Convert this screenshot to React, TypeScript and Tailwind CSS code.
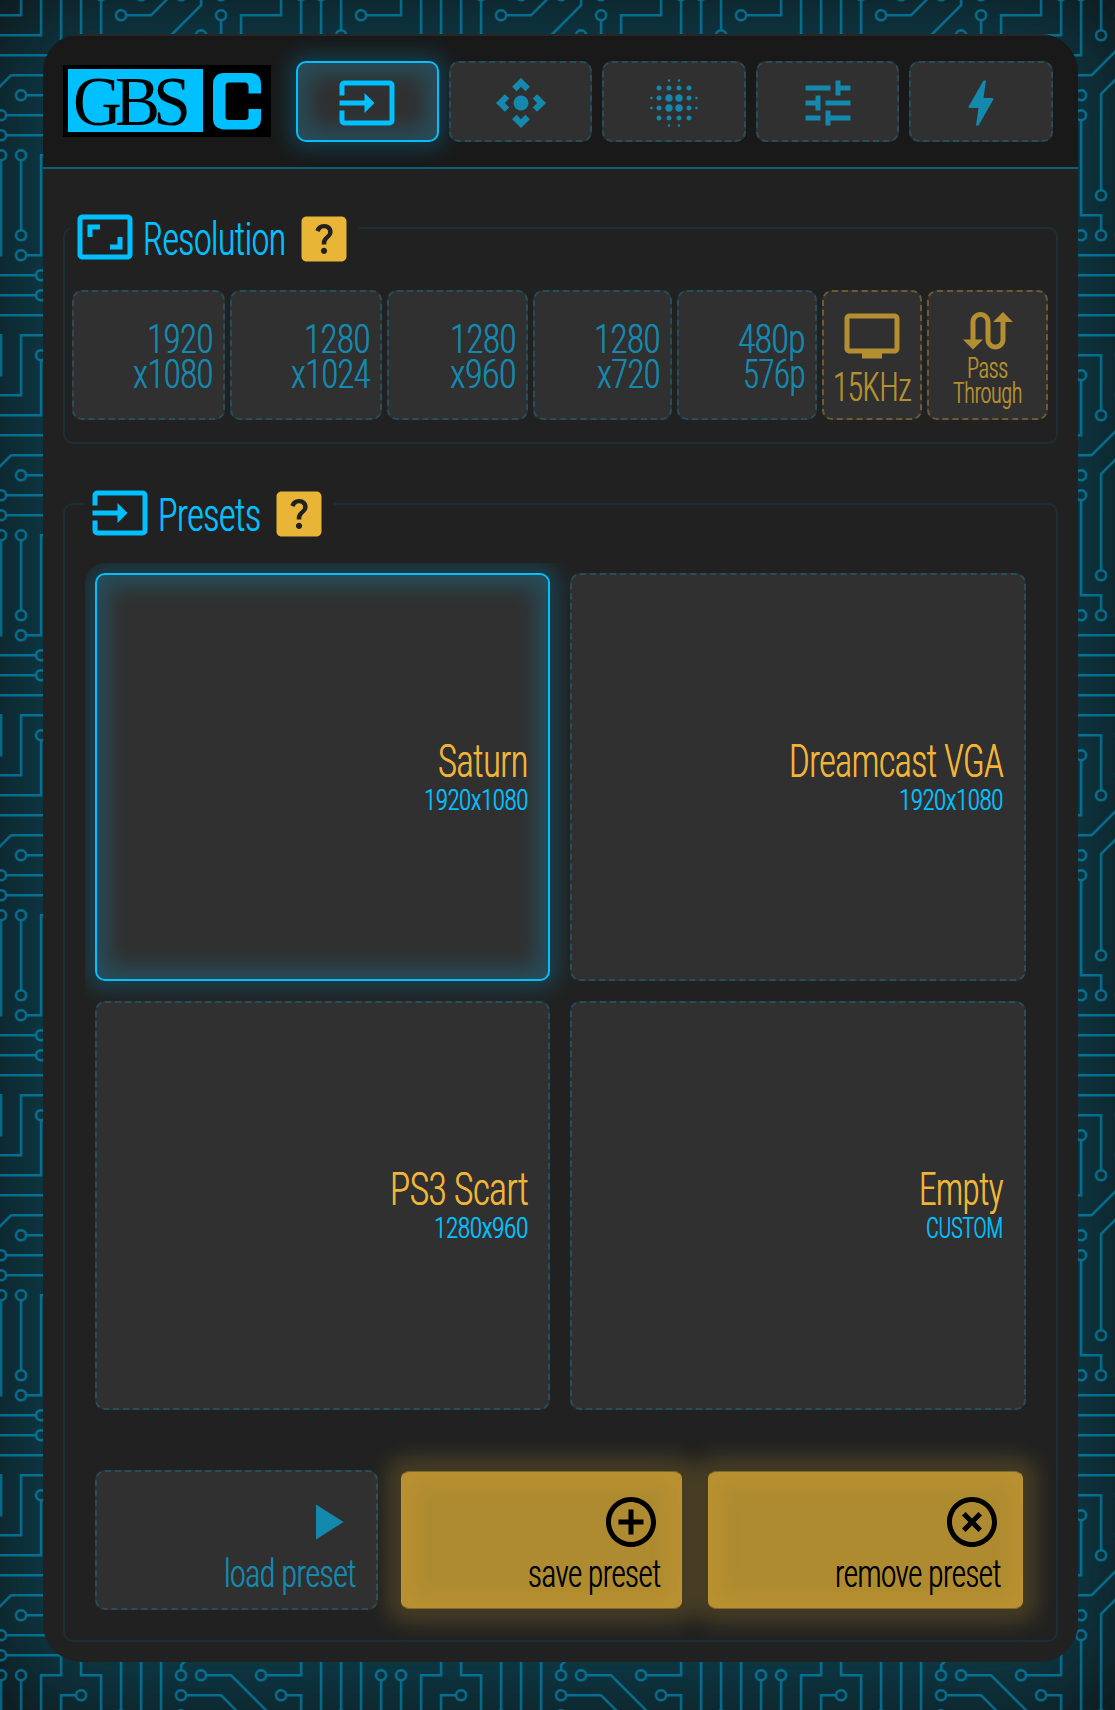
import { useLayoutEffect, useRef, useState } from "react";
import {
  MdAddCircleOutline,
  MdAspectRatio,
  MdBlurOn,
  MdBolt,
  MdControlCamera,
  MdHelpCenter,
  MdHighlightOff,
  MdInput,
  MdPlayArrow,
  MdSwapCalls,
  MdTune,
  MdTv,
} from "react-icons/md";

const TRACES =
  "M44.1 224a5 5 0 1 1 0 2H0v-2h44.1zm160 48a5 5 0 1 1 0 2H82v-2h122.1zm57.8-46a5 5 0 1 1 0-2H304v2h-42.1zm0 16a5 5 0 1 1 0-2H304v2h-42.1zm6.2-114a5 5 0 1 1 0 2h-86.2a5 5 0 1 1 0-2h86.2zm-256-48a5 5 0 1 1 0 2H0v-2h12.1zm185.8 34a5 5 0 1 1 0-2h86.2a5 5 0 1 1 0 2h-86.2zM258 12.1a5 5 0 1 1-2 0V0h2v12.1zm-64 208a5 5 0 1 1-2 0v-54.2a5 5 0 1 1 2 0v54.2zm48-198.2V80h62v2h-64V21.9a5 5 0 1 1 2 0zm16 16V64h46v2h-48V37.9a5 5 0 1 1 2 0zm-128 96V208h16v12.1a5 5 0 1 1-2 0V210h-16v-76.1a5 5 0 1 1 2 0zm-5.9-21.9a5 5 0 1 1 0 2H114v48H85.9a5 5 0 1 1 0-2H112v-48h12.1zm-6.2 130a5 5 0 1 1 0-2H176v-74.1a5 5 0 1 1 2 0V242h-60.1zm-16-64a5 5 0 1 1 0-2H114v48h10.1a5 5 0 1 1 0 2H112v-48h-10.1zM66 284.1a5 5 0 1 1-2 0V274H50v30h-2v-32h18v12.1zM236.1 176a5 5 0 1 1 0 2H226v94h48v32h-2v-30h-48v-98h12.1zm25.8-30a5 5 0 1 1 0-2H274v44.1a5 5 0 1 1-2 0V146h-10.1zm-64 96a5 5 0 1 1 0-2H208v-80h16v-14h-42.1a5 5 0 1 1 0-2H226v18h-16v80h-12.1zm86.2-210a5 5 0 1 1 0 2H272V0h2v32h10.1zM98 101.9V146H53.9a5 5 0 1 1 0-2H96v-42.1a5 5 0 1 1 2 0zM53.9 34a5 5 0 1 1 0-2H80V0h2v34H53.9zm60.1 3.9V66H82v64H69.9a5 5 0 1 1 0-2H80V64h32V37.9a5 5 0 1 1 2 0zM101.9 82a5 5 0 1 1 0-2H128V37.9a5 5 0 1 1 2 0V82h-28.1zm16-64a5 5 0 1 1 0-2H146v44.1a5 5 0 1 1-2 0V18h-26.1zm102.2 270a5 5 0 1 1 0 2H98v14h-2v-16h124.1zM242 149.9V160h16v34h-16v62h48v48h-2v-46h-48v-66h16v-30h-16v-12.1a5 5 0 1 1 2 0zM53.9 18a5 5 0 1 1 0-2H64V2H48V0h18v18H53.9zm112 32a5 5 0 1 1 0-2H192V0h50v2h-48v48h-28.1zm-48-48a5 5 0 0 1-9.8-2h2.07a3 3 0 1 0 5.66 0H178v34h-18V21.9a5 5 0 1 1 2 0V32h14V2h-58.1zm0 96a5 5 0 1 1 0-2H137l32-32h39V21.9a5 5 0 1 1 2 0V66h-40.17l-32 32H117.9zm28.1 90.1a5 5 0 1 1-2 0v-76.51L175.59 80H224V21.9a5 5 0 1 1 2 0V82h-49.59L146 112.41v75.69zm16 32a5 5 0 1 1-2 0v-99.51L184.59 96H300.1a5 5 0 0 1 3.9-3.9v2.07a3 3 0 0 0 0 5.66v2.07a5 5 0 0 1-3.9-3.9H185.41L162 121.41v98.69zm-144-64a5 5 0 1 1-2 0v-3.51l48-48V48h32V0h2v50H66v55.41l-48 48v2.69zM50 53.9v43.51l-48 48V208h26.1a5 5 0 1 1 0 2H0v-65.41l48-48V53.9a5 5 0 1 1 2 0zm-16 16V89.41l-34 34v-2.82l32-32V69.9a5 5 0 1 1 2 0zM12.1 32a5 5 0 1 1 0 2H9.41L0 43.41V40.6L8.59 32h3.51zm265.8 18a5 5 0 1 1 0-2h18.69l7.41-7.41v2.82L297.41 50H277.9zm-16 160a5 5 0 1 1 0-2H288v-71.41l16-16v2.82l-14 14V210h-28.1zm-208 32a5 5 0 1 1 0-2H64v-22.59L40.59 194H21.9a5 5 0 1 1 0-2H41.41L66 216.59V242H53.9zm150.2 14a5 5 0 1 1 0 2H96v-56.6L56.6 162H37.9a5 5 0 1 1 0-2h19.5L98 200.6V256h106.1zm-150.2 2a5 5 0 1 1 0-2H80v-46.59L48.59 178H21.9a5 5 0 1 1 0-2H49.41L82 208.59V258H53.9zM34 39.8v1.61L9.41 66H0v-2h8.59L32 40.59V0h2v39.8zM2 300.1a5 5 0 0 1 3.9 3.9H3.83A3 3 0 0 0 0 302.17V256h18v48h-2v-46H2v42.1zM34 241v63h-2v-62H0v-2h34v1zM17 18H0v-2h16V0h2v18h-1zm273-2h14v2h-16V0h2v16zm-32 273v15h-2v-14h-14v14h-2v-16h18v1zM0 92.1A5.02 5.02 0 0 1 6 97a5 5 0 0 1-6 4.9v-2.07a3 3 0 1 0 0-5.66V92.1zM80 272h2v32h-2v-32zm37.9 32h-2.07a3 3 0 0 0-5.66 0h-2.07a5 5 0 0 1 9.8 0zM5.9 0A5.02 5.02 0 0 1 0 5.9V3.83A3 3 0 0 0 3.83 0H5.9zm294.2 0h2.07A3 3 0 0 0 304 3.83V5.9a5 5 0 0 1-3.9-5.9zm3.9 300.1v2.07a3 3 0 0 0-1.83 1.83h-2.07a5 5 0 0 1 3.9-3.9z";

// Follows the traces and returns a ring-hole subpath for every solder pad they end in.
function padHoles(d: string): string {
  const out: string[] = [];
  let x = 0;
  let y = 0;
  let sx = 0;
  let sy = 0;
  for (const [, cmd, args] of d.matchAll(/([a-zA-Z])([^a-zA-Z]*)/g)) {
    const n = (args.match(/-?\d*\.?\d+/g) ?? []).map(Number);
    const rel = cmd === cmd.toLowerCase();
    const bx = rel ? x : 0;
    const by = rel ? y : 0;
    switch (cmd.toLowerCase()) {
      case "m":
        x = sx = bx + n[0];
        y = sy = by + n[1];
        break;
      case "l":
        x = bx + n[0];
        y = by + n[1];
        break;
      case "h":
        x = bx + n[0];
        break;
      case "v":
        y = by + n[0];
        break;
      case "a": {
        const nx = bx + n[5];
        const ny = by + n[6];
        if (n[0] === 5 && n[3] === 1 && n[4] === 1) {
          const cx = Math.round((x + nx) / 2 + (ny - y) * 2.45);
          const cy = Math.round((y + ny) / 2 - (nx - x) * 2.45);
          out.push(`M${cx} ${cy + 3}a3 3 0 1 0 0-6 3 3 0 0 0 0 6z`);
        }
        x = nx;
        y = ny;
        break;
      }
      default:
        x = sx;
        y = sy;
    }
  }
  return out.join("");
}

const CIRCUIT = TRACES + padHoles(TRACES);

function CircuitBackground() {
  return (
    <svg className="absolute inset-0 h-full w-full" aria-hidden="true">
      <defs>
        <pattern
          id="circuit"
          width="304"
          height="304"
          patternUnits="userSpaceOnUse"
          patternTransform="translate(-220.2 -46) scale(1.25)"
        >
          <path d={CIRCUIT} fill="#00c0ff" fillOpacity="0.44" />
        </pattern>
      </defs>
      <rect width="100%" height="100%" fill="url(#circuit)" />
    </svg>
  );
}

// Condensed lettering: squeezes the text horizontally to the width of its box.
function Narrow({ text, className }: { text: string; className: string }) {
  const box = useRef<HTMLSpanElement>(null);
  const ink = useRef<HTMLSpanElement>(null);
  const [k, setK] = useState(1);
  useLayoutEffect(() => {
    if (box.current && ink.current) setK(box.current.offsetWidth / ink.current.offsetWidth);
  }, [text]);
  return (
    <span ref={box} className={`block shrink-0 ${className}`}>
      <span
        ref={ink}
        className="inline-block origin-left whitespace-nowrap align-top"
        style={{ transform: `scaleX(${k})` }}
      >
        {text}
      </span>
    </span>
  );
}

function Logo() {
  return (
    <div className="mt-1 flex h-[72px] w-[208px] bg-black pt-1 pl-[5px]">
      <div className="h-[63px] w-[135px] bg-[#00c0ff] pl-[5px] font-['Liberation_Serif',serif] font-normal text-black">
        <Narrow text="GBS" className="w-[111px] text-[70px] leading-[66px] tracking-[-7px]" />
      </div>
      <svg className="mt-1 ml-[10px] h-[57px] w-[49px]" viewBox="0 0 49 57" fill="#00c0ff" role="img" aria-label="C">
        <path d="M10 0H38Q48 1 48 11V20.500H35.500V13Q35 9.500 32 9.500H16Q12.500 9.500 12.500 13V44Q12.500 47 16 47H32Q35 47 35.500 44V36H48V46Q48 55.500 38 56.500H10Q0 55.500 0 46V11Q0 1 10 0Z" />
      </svg>
    </div>
  );
}

const NAV = [MdInput, MdControlCamera, MdBlurOn, MdTune, MdBolt];

function Nav() {
  return (
    <nav className="grid h-[81px] grid-cols-[143px_143px_144px_143px_144px] gap-[10px]">
      {NAV.map((Icon, i) => (
        <button
          key={i}
          className={
            i === 0
              ? "flex items-center justify-center rounded-[10px] border-2 border-[#00c0ff] bg-[#303030] pt-[2px] pr-[1px] text-[#00c0ff] shadow-[0_0_20px_8px_rgba(0,192,255,0.2),inset_0_0_20px_12px_rgba(0,192,255,0.2)]"
              : "flex items-center justify-center rounded-[10px] border-2 border-dashed border-[#264f5d] bg-[#303030] pt-[2px] text-[#1588ae]"
          }
        >
          <Icon size={60} />
        </button>
      ))}
    </nav>
  );
}

function Legend({
  icon: Icon,
  text,
  width,
  className,
  helpClass,
}: {
  icon: typeof MdInput;
  text: string;
  width: string;
  className: string;
  helpClass: string;
}) {
  return (
    <legend className={`h-[78px] pt-[18px] pr-[5px] pl-[5px] ${className}`}>
      <span className="flex items-start text-[#00c0ff]">
        <Icon size={60} className="shrink-0" />
        <Narrow text={text} className={`ml-2 text-[47px] leading-[64px] ${width}`} />
        <MdHelpCenter size={60} className={`shrink-0 text-[#e9b537] ${helpClass}`} />
      </span>
    </legend>
  );
}

const RESOLUTIONS = [
  { box: "w-[153px]", a: "1920", aw: "w-[66px]", b: "x1080", bw: "w-[80px]" },
  { box: "w-[152px]", a: "1280", aw: "w-[66px]", b: "x1024", bw: "w-[79px]" },
  { box: "w-[141px]", a: "1280", aw: "w-[66px]", b: "x960", bw: "w-[66px]" },
  { box: "w-[139px]", a: "1280", aw: "w-[66px]", b: "x720", bw: "w-[63px]" },
  { box: "w-[140px]", a: "480p", aw: "w-[67px]", b: "576p", bw: "w-[62px]" },
];

function Resolutions() {
  return (
    <fieldset className="mt-5 h-[255px] rounded-[10px] border-2 border-[#1c2f36] pr-2 pl-[7px]">
      <Legend
        icon={MdAspectRatio}
        text="Resolution"
        width="w-[143px]"
        className="-ml-[2px]"
        helpClass="mt-[2px] ml-2"
      />
      <div className="mt-[23px] flex h-[130px] gap-[5px] text-[41px] leading-[35px] text-[#1588ae]">
        {RESOLUTIONS.map((r, i) => (
          <button
            key={i}
            className={`flex flex-col items-end rounded-[10px] border-2 border-dashed border-[#264f5d] bg-[#303030] pt-[30px] pr-[10px] ${r.box}`}
          >
            <Narrow text={r.a} className={r.aw} />
            <Narrow text={r.b} className={r.bw} />
          </button>
        ))}
        <button className="flex w-[100px] flex-col items-center rounded-[10px] border-2 border-dashed border-[#6f5b32] bg-[#303030] pt-[14px] text-[#b38f31]">
          <MdTv size={60} className="mr-[1px]" />
          <Narrow text="15KHz" className="mt-[4px] w-[78px]" />
        </button>
        <button className="flex w-[121px] flex-col items-center rounded-[10px] border-2 border-dashed border-[#6f5b32] bg-[#303030] pt-[10px] text-[29px] leading-[25px] text-[#b38f31]">
          <MdSwapCalls size={60} />
          <Narrow text="Pass" className="-mt-[6px] w-[41px]" />
          <Narrow text="Through" className="w-[69px]" />
        </button>
      </div>
    </fieldset>
  );
}

const PRESETS = [
  { name: "Saturn", nw: "w-[90px]", res: "1920x1080", rw: "w-[104px]", pad: "pr-5", on: true },
  { name: "Dreamcast VGA", nw: "w-[214px]", res: "1920x1080", rw: "w-[104px]", pad: "pr-[21px]", on: false },
  { name: "PS3 Scart", nw: "w-[138px]", res: "1280x960", rw: "w-[94px]", pad: "pr-5", on: false },
  { name: "Empty", nw: "w-[84px]", res: "CUSTOM", rw: "w-[77px]", pad: "pr-[21px]", on: false },
];

const GOLD =
  "flex h-[138px] flex-col items-end rounded-[8px] border border-x-[#c0972f] border-y-[#80672e] bg-[#ae8b30] pt-[20px] text-black shadow-[0_0_20px_15px_rgba(233,181,55,0.18),inset_0_0_20px_12px_rgba(233,170,55,0.2)]";

function Presets() {
  return (
    <fieldset className="mt-[21px] h-[1177px] rounded-[10px] border-2 border-[#1c2f36] px-5">
      <Legend icon={MdInput} text="Presets" width="w-[103px]" className="" helpClass="mt-[1px] ml-2" />
      <div className="mt-5 grid h-[857px] grid-cols-[455px_456px] grid-rows-[408px_409px] gap-5 overflow-hidden rounded-[20px] p-[10px]">
        {PRESETS.map((p) => (
          <button
            key={p.name}
            className={
              p.on
                ? `flex flex-col items-end rounded-[10px] border-2 border-[#00c0ff] bg-[#303030] pt-[161px] shadow-[0_0_20px_9px_rgba(0,192,255,0.2),inset_0_0_20px_12px_rgba(0,192,255,0.2)] ${p.pad}`
                : `flex flex-col items-end rounded-[10px] border-2 border-dashed border-[#264f5d] bg-[#303030] pt-[161px] ${p.pad}`
            }
          >
            <Narrow text={p.name} className={`text-[46px] leading-[50px] text-[#f0b537] ${p.nw}`} />
            <Narrow text={p.res} className={`text-[29px] leading-[28px] text-[#00c0ff] ${p.rw}`} />
          </button>
        ))}
      </div>
      <div className="mt-[50px] flex h-[140px] items-center px-[10px] text-[38px] leading-[44px]">
        <button className="flex h-[140px] w-[283px] flex-col items-end rounded-[10px] border-2 border-dashed border-[#264f5d] bg-[#303030] pt-[20px] pr-[20px] text-[#1588ae]">
          <MdPlayArrow size={60} />
          <Narrow text="load preset" className="w-[132px]" />
        </button>
        <button className={`ml-[23px] w-[281px] pr-[20px] ${GOLD}`}>
          <MdAddCircleOutline size={60} />
          <Narrow text="save preset" className="w-[133px]" />
        </button>
        <button className={`ml-[26px] w-[315px] pr-[21px] ${GOLD}`}>
          <MdHighlightOff size={60} className="-mr-[1px]" />
          <Narrow text="remove preset" className="w-[166px]" />
        </button>
      </div>
    </fieldset>
  );
}

export default function App() {
  return (
    <div className="relative h-[1710px] w-[1115px] overflow-hidden bg-[#0d4150] px-[43px] pt-[34px] font-[Roboto,sans-serif] shadow-[inset_0_0_120px_#101010]">
      <CircuitBackground />
      <main className="relative h-[1628px] w-[1035px] overflow-hidden rounded-[38px] bg-[#212121] font-light">
        <div className="h-[2px] bg-[#272727]" />
        <header className="flex h-[133px] justify-between border-b-2 border-[#0f5f75] bg-[#191919] pt-[25px] pr-[25px] pl-5">
          <Logo />
          <Nav />
        </header>
        <div className="px-5 [text-shadow:0.7px_0_0_currentColor] [&_button]:[text-shadow:0.7px_0_0_currentColor]">
          <Resolutions />
          <Presets />
        </div>
      </main>
    </div>
  );
}
